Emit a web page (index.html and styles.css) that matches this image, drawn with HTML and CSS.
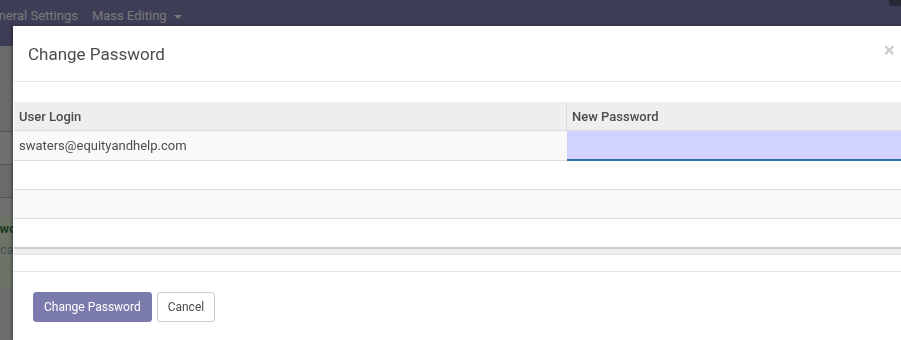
FILE: index.html
```html
<!doctype html>
<html lang="en">
<head>
    <meta charset="UTF-8">
    <title>Change Password</title>
    <link rel="stylesheet" href="styles.css">
</head>
<body>
<div class="app">
    <div class="navbar">
        <span class="nav_item nav_item-first">General Settings</span>
        <span class="nav_item">Mass Editing <span class="caret"></span></span>
        <span class="nav_avatar"></span>
    </div>
    <div class="content">
        <div class="list_row"></div>
        <div class="list_row list_row-light"></div>
        <div class="list_row"></div>
        <div class="list_row list_row-light list_row-short"></div>
        <div class="alert">
            <div class="alert_title">Password</div>
            <div class="alert_text">cannot be changed</div>
        </div>
    </div>
</div>

<div class="backdrop"></div>

<div class="modal">
    <div class="modal_header">
        <h4 class="modal_title">Change Password</h4>
        <span class="modal_close">&times;</span>
    </div>
    <div class="modal_body">
        <table class="grid">
            <thead>
            <tr>
                <th class="col_login">User Login</th>
                <th>New Password</th>
            </tr>
            </thead>
            <tbody>
            <tr class="row-odd">
                <td>swaters@equityandhelp.com</td>
                <td class="cell_input"></td>
            </tr>
            <tr><td></td><td></td></tr>
            <tr class="row-odd"><td></td><td></td></tr>
            <tr><td></td><td></td></tr>
            </tbody>
            <tfoot>
            <tr><td></td><td></td></tr>
            </tfoot>
        </table>
    </div>
    <div class="modal_footer">
        <button class="btn btn-primary">Change Password</button>
        <button class="btn btn-secondary">Cancel</button>
    </div>
</div>
</body>
</html>
```

FILE: styles.css
```css
html, body {
    margin: 0;
    padding: 0;
    height: 100%;
    overflow: hidden;
}

body {
    font-family: Roboto, "Liberation Sans", sans-serif;
    font-size: 13px;
    color: #4c4c4c;
    background: #dcdcdc;
}

.navbar {
    display: flex;
    align-items: flex-start;
    height: 46px;
    background: #7c7bad;
    color: #f0f0f6;
}

.nav_item {
    padding-top: 8px;
    margin-right: 14px;
    line-height: 16px;
}

.nav_item-first {
    margin-left: -17px;
}

.caret {
    display: inline-block;
    width: 0;
    height: 0;
    margin-left: 4px;
    vertical-align: middle;
    border-top: 4px solid;
    border-left: 4px solid transparent;
    border-right: 4px solid transparent;
}

.nav_avatar {
    margin-left: auto;
    width: 12px;
    height: 6px;
    background: #55536e;
    border-bottom-left-radius: 3px;
}

.content {
    padding-top: 40px;
    background: #d4d4d4;
}

.list_row {
    height: 32px;
    border-bottom: 1px solid #aaa;
}

.list_row:first-child {
    height: 45px;
}

.list_row-light {
    background: #e0e0e0;
}

.list_row-short {
    height: 17px;
    border-bottom: none;
}

.alert {
    height: 67px;
    padding: 6px 0 0;
    background: #d8e8cf;
}

.alert_title {
    margin-left: -29px;
    font-weight: bold;
    color: #3c763d;
}

.alert_text {
    margin-top: 6px;
    color: #8e9ab4;
}

.backdrop {
    position: fixed;
    left: 0;
    top: 0;
    right: 0;
    bottom: 0;
    background: rgba(0, 0, 0, 0.5);
}

.modal {
    position: absolute;
    left: 13px;
    top: 26px;
    width: 897px;
    height: 314px;
    overflow: hidden;
    background: white;
    box-shadow: -1px 0 3px rgba(0, 0, 0, 0.4);
}

.modal_header {
    display: flex;
    align-items: center;
    justify-content: space-between;
    height: 55px;
    padding: 0 15px;
    border-bottom: 1px solid #e5e5e5;
}

.modal_title {
    margin: 0;
    font-size: 17px;
    font-weight: normal;
    color: #4c4c4c;
}

.modal_close {
    margin-top: -7px;
    font-size: 21px;
    font-weight: bold;
    color: #000;
    opacity: 0.2;
}

.modal_body {
    padding: 20px 0 16px 1px;
}

.grid {
    width: 100%;
    border-collapse: collapse;
}

.grid th {
    height: 28px;
    padding: 0 5px;
    text-align: left;
    font-weight: 500;
    color: #4c4c4c;
    background: #eee;
    border-bottom: 1px solid #ddd;
}

.grid th + th {
    border-left: 1px solid #ddd;
}

.col_login {
    width: 542px;
}

.grid td {
    height: 28px;
    padding: 0 5px;
    color: #4c4c4c;
    border-bottom: 1px solid #ddd;
}

.row-odd td {
    background: #f9f9f9;
}

.grid .cell_input {
    background: #d2d2ff;
    border-bottom: 2px solid #2c70b1;
}

.grid tbody tr:last-child td {
    border-bottom: none;
}

.grid tfoot td {
    height: 5px;
    padding: 0;
    background: #eee;
    border-top: 2px solid #ccc;
    border-bottom: 1px solid #ddd;
}

.modal_footer {
    display: flex;
    gap: 5px;
    padding: 20px 20px;
    border-top: 1px solid #e5e5e5;
}

.btn {
    height: 30px;
    padding: 0 10px;
    font-family: Roboto, "Liberation Sans", sans-serif;
    font-size: 12px;
    border-radius: 3px;
    cursor: pointer;
}

.btn-primary {
    color: white;
    background: #7c7bad;
    border: 1px solid #7c7bad;
}

.btn-secondary {
    padding: 0 10px;
    color: #4c4c4c;
    background: white;
    border: 1px solid #ccc;
}
```
